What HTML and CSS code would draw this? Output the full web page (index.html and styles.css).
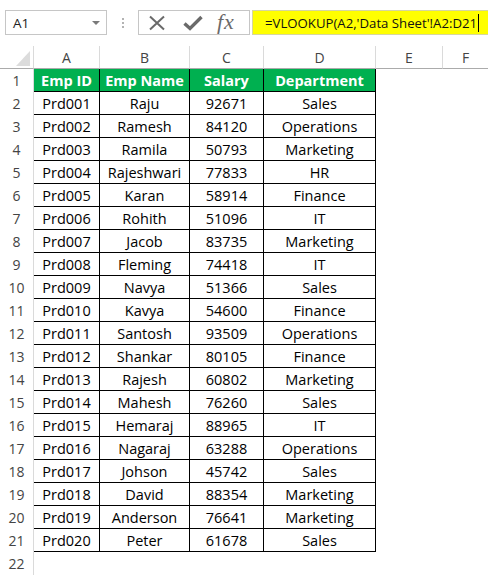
FILE: index.html
```html
<!DOCTYPE html>
<html>
<head>
<meta charset="utf-8">
<link rel="stylesheet" href="styles.css">
</head>
<body>
<div class="toolbar">
  <div class="namebox"><span class="nb-text">A1</span><span class="nb-arrow"></span></div>
  <div class="dots"><i></i><i></i><i></i></div>
  <div class="fbtns">
    <svg class="ico-x" width="18" height="16" viewBox="0 0 18 16"><path d="M2 1.5 L16 14.5 M16 1.5 L2 14.5" stroke="#6a6a6a" stroke-width="2" fill="none"/></svg>
    <svg class="ico-ok" width="20" height="16" viewBox="0 0 20 16"><path d="M1.5 8.5 L7 13.5 L18.5 2" stroke="#6a6a6a" stroke-width="3.4" fill="none" stroke-linejoin="miter"/></svg>
    <span class="fx">fx</span>
  </div>
  <div class="formula"><span class="ftext">=VLOOKUP(A2,'Data Sheet'!A2:D21</span><span class="caret"></span></div>
</div>
<div class="sheet">
  <div class="corner"><span class="tri"></span></div>
  <div class="ch">A</div><div class="ch">B</div><div class="ch">C</div><div class="ch">D</div><div class="ch">E</div><div class="ch chl">F</div>

  <div class="rh">1</div><div class="c h">Emp ID</div><div class="c h">Emp Name</div><div class="c h">Salary</div><div class="c h">Department</div><div class="e"></div><div class="e"></div>
  <div class="rh">2</div><div class="c">Prd001</div><div class="c">Raju</div><div class="c">92671</div><div class="c">Sales</div><div class="e"></div><div class="e"></div>
  <div class="rh">3</div><div class="c">Prd002</div><div class="c">Ramesh</div><div class="c">84120</div><div class="c">Operations</div><div class="e"></div><div class="e"></div>
  <div class="rh">4</div><div class="c">Prd003</div><div class="c">Ramila</div><div class="c">50793</div><div class="c">Marketing</div><div class="e"></div><div class="e"></div>
  <div class="rh">5</div><div class="c">Prd004</div><div class="c">Rajeshwari</div><div class="c">77833</div><div class="c">HR</div><div class="e"></div><div class="e"></div>
  <div class="rh">6</div><div class="c">Prd005</div><div class="c">Karan</div><div class="c">58914</div><div class="c">Finance</div><div class="e"></div><div class="e"></div>
  <div class="rh">7</div><div class="c">Prd006</div><div class="c">Rohith</div><div class="c">51096</div><div class="c">IT</div><div class="e"></div><div class="e"></div>
  <div class="rh">8</div><div class="c">Prd007</div><div class="c">Jacob</div><div class="c">83735</div><div class="c">Marketing</div><div class="e"></div><div class="e"></div>
  <div class="rh">9</div><div class="c">Prd008</div><div class="c">Fleming</div><div class="c">74418</div><div class="c">IT</div><div class="e"></div><div class="e"></div>
  <div class="rh">10</div><div class="c">Prd009</div><div class="c">Navya</div><div class="c">51366</div><div class="c">Sales</div><div class="e"></div><div class="e"></div>
  <div class="rh">11</div><div class="c">Prd010</div><div class="c">Kavya</div><div class="c">54600</div><div class="c">Finance</div><div class="e"></div><div class="e"></div>
  <div class="rh">12</div><div class="c">Prd011</div><div class="c">Santosh</div><div class="c">93509</div><div class="c">Operations</div><div class="e"></div><div class="e"></div>
  <div class="rh">13</div><div class="c">Prd012</div><div class="c">Shankar</div><div class="c">80105</div><div class="c">Finance</div><div class="e"></div><div class="e"></div>
  <div class="rh">14</div><div class="c">Prd013</div><div class="c">Rajesh</div><div class="c">60802</div><div class="c">Marketing</div><div class="e"></div><div class="e"></div>
  <div class="rh">15</div><div class="c">Prd014</div><div class="c">Mahesh</div><div class="c">76260</div><div class="c">Sales</div><div class="e"></div><div class="e"></div>
  <div class="rh">16</div><div class="c">Prd015</div><div class="c">Hemaraj</div><div class="c">88965</div><div class="c">IT</div><div class="e"></div><div class="e"></div>
  <div class="rh">17</div><div class="c">Prd016</div><div class="c">Nagaraj</div><div class="c">63288</div><div class="c">Operations</div><div class="e"></div><div class="e"></div>
  <div class="rh">18</div><div class="c">Prd017</div><div class="c">Johson</div><div class="c">45742</div><div class="c">Sales</div><div class="e"></div><div class="e"></div>
  <div class="rh">19</div><div class="c">Prd018</div><div class="c">David</div><div class="c">88354</div><div class="c">Marketing</div><div class="e"></div><div class="e"></div>
  <div class="rh">20</div><div class="c">Prd019</div><div class="c">Anderson</div><div class="c">76641</div><div class="c">Marketing</div><div class="e"></div><div class="e"></div>
  <div class="rh">21</div><div class="c">Prd020</div><div class="c">Peter</div><div class="c">61678</div><div class="c">Sales</div><div class="e"></div><div class="e"></div>
  <div class="rh">22</div><div class="e"></div><div class="e"></div><div class="e"></div><div class="e"></div><div class="e"></div><div class="e"></div>
</div>
</body>
</html>
```

FILE: styles.css
```css
* { box-sizing: border-box; }
html, body { margin: 0; padding: 0; background: #fff; }
body {
  width: 488px;
  height: 575px;
  overflow: hidden;
  font-family: "Open Sans", "Liberation Sans", sans-serif;
}

.toolbar {
  height: 46px;
  display: flex;
  align-items: flex-start;
  padding-top: 10px;
  padding-left: 5px;
}

.namebox {
  width: 102px;
  height: 25px;
  border: 1px solid #c6c6c6;
  display: flex;
  align-items: center;
  justify-content: space-between;
  padding: 0 6px 0 7px;
  font-size: 13.5px;
  color: #222;
}
.nb-arrow {
  width: 0;
  height: 0;
  border-left: 4px solid transparent;
  border-right: 4px solid transparent;
  border-top: 4px solid #7a7a7a;
}

.dots {
  width: 31px;
  height: 25px;
  display: flex;
  flex-direction: column;
  align-items: center;
  justify-content: center;
  gap: 2px;
}
.dots i {
  display: block;
  width: 2px;
  height: 2px;
  background: #b3b3b3;
}

.fbtns {
  width: 112px;
  height: 25px;
  border: 1px solid #c6c6c6;
  display: flex;
  align-items: center;
  padding-left: 9px;
}
.ico-x { margin-right: 17px; }
.ico-ok { margin-right: 14px; }
.fx {
  font-family: "Liberation Serif", "DejaVu Serif", serif;
  font-style: italic;
  font-size: 22px;
  letter-spacing: 1px;
  color: #6a6a6a;
  line-height: 1;
  margin-top: -2px;
}

.formula {
  flex: 1;
  height: 25px;
  margin-left: 2px;
  background: #ffff00;
  border: 1px solid #d6d6a0;
  border-right: none;
  display: flex;
  align-items: center;
  padding-left: 12px;
  font-size: 13.2px;
  color: #111;
}
.caret {
  display: inline-block;
  width: 1px;
  height: 18px;
  background: #000;
  margin-left: 1px;
}

.sheet {
  display: grid;
  grid-template-columns: 34px 66px 90px 74px 112px 67px 1fr;
  grid-auto-rows: 23px;
  font-size: 14.5px;
}

.corner {
  border-right: 1px solid #dadada;
  border-bottom: 1px solid #ababab;
  position: relative;
}
.tri {
  position: absolute;
  right: 3px;
  bottom: 2px;
  width: 0;
  height: 0;
  border-left: 14px solid transparent;
  border-bottom: 15px solid #dcdcdc;
}

.ch {
  border-right: 1px solid #dadada;
  border-bottom: 1px solid #ababab;
  display: flex;
  align-items: center;
  justify-content: center;
  color: #444;
  font-size: 14px;
}
.chl { border-right: none; }

.rh {
  border-right: 1px solid #dadada;
  display: flex;
  align-items: center;
  justify-content: center;
  color: #444;
  font-size: 14px;
}

.c {
  border-right: 1px solid #000;
  border-bottom: 1px solid #000;
  display: flex;
  align-items: center;
  justify-content: center;
  color: #000;
  white-space: nowrap;
}
.h {
  background: #00b050;
  color: #fff;
  font-weight: 700;
}
.e { }
```
